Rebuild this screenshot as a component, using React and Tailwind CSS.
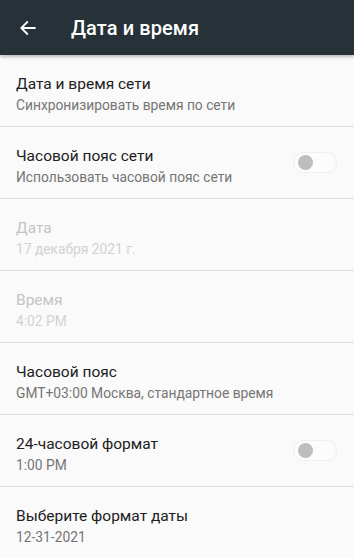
import React from 'react';

const ROWS = [
    { title: 'Дата и время сети', sub: 'Синхронизировать время по сети' },
    { title: 'Часовой пояс сети', sub: 'Использовать часовой пояс сети', toggle: true },
    { title: 'Дата', sub: '17 декабря 2021 г.', disabled: true },
    { title: 'Время', sub: '4:02 PM', disabled: true },
    { title: 'Часовой пояс', sub: 'GMT+03:00 Москва, стандартное время' },
    { title: '24-часовой формат', sub: '1:00 PM', toggle: true },
    { title: 'Выберите формат даты', sub: '12-31-2021', last: true },
];

const Toggle = () => (
    <div className="w-[44px] h-[21px] rounded-full bg-[#fcfcfc] border border-[#eeeeee] flex items-center pl-[4px] mr-[1px]">
        <div className="w-[15px] h-[15px] rounded-full bg-[#bdbdbd]" />
    </div>
);

const App = () => {
    return (
        <div className="w-[354px] h-[558px] overflow-hidden bg-[#fafafa] flex flex-col" style={{ fontFamily: 'Roboto, "Noto Sans", sans-serif' }}>
            {/* Toolbar */}
            <header className="h-[55px] shrink-0 bg-[#263238] flex items-center shadow-[0_2px_3px_rgba(0,0,0,0.25)] relative z-10">
                <svg className="ml-[18px] mt-[1px]" width="20" height="20" viewBox="0 0 24 24" fill="none">
                    <path d="M20 12H4.5M11 5l-7 7 7 7" stroke="#ffffff" strokeWidth="2.2" strokeLinecap="square" />
                </svg>
                <h1 className="ml-[33px] text-[20px] font-medium text-white tracking-[0.1px]">Дата и время</h1>
            </header>

            <div className="flex-1 flex flex-col">
                {ROWS.map((row, i) => (
                    <div key={i} className={`h-[72px] shrink-0 flex items-start justify-between px-[16px] pt-[18px] ${row.last ? '' : 'border-b border-[#e0e0e0]'}`}>
                        <div className="flex flex-col">
                            <span className={`text-[15.5px] leading-[22px] ${row.disabled ? 'text-[#c4c4c4]' : 'text-[#212121]'}`}>{row.title}</span>
                            <span className={`text-[13.8px] leading-[21px] ${row.disabled ? 'text-[#d2d2d2]' : 'text-[#757575]'}`}>{row.sub}</span>
                        </div>
                        {row.toggle && <div className="mt-[7px]"><Toggle /></div>}
                    </div>
                ))}
            </div>
        </div>
    );
};

export default App;
